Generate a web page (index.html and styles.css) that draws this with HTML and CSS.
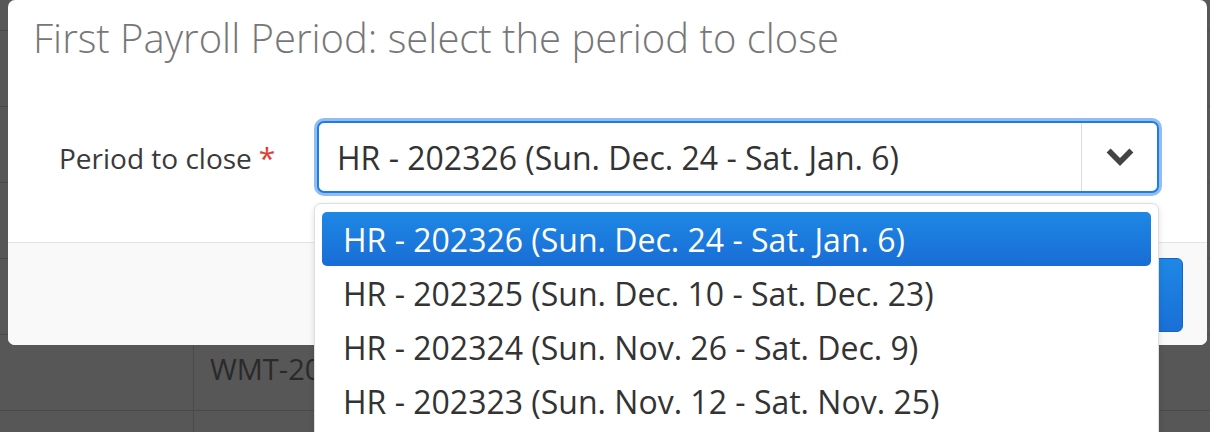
FILE: index.html
```html
<!DOCTYPE html>
<html>
<head>
<meta charset="utf-8">
<link rel="stylesheet" href="styles.css">
</head>
<body>
<div class="backdrop">
  <div class="bg-row first"><div class="cell c1"></div><div class="cell c2"></div></div>
  <div class="bg-row"><div class="cell c1"></div><div class="cell c2"></div></div>
  <div class="bg-row"><div class="cell c1"></div><div class="cell c2"></div></div>
  <div class="bg-row"><div class="cell c1"></div><div class="cell c2"></div></div>
  <div class="bg-row"><div class="cell c1"></div><div class="cell c2"></div></div>
  <div class="bg-row"><div class="cell c1"></div><div class="cell c2">WMT-2023-0412</div></div>
  <div class="bg-row"><div class="cell c1"></div><div class="cell c2"></div></div>
</div>

<div class="modal">
  <div class="modal-header">
    <h4 class="modal-title">First Payroll Period: select the period to close</h4>
  </div>
  <div class="modal-body">
    <div class="form-row">
      <label class="control-label">Period to close<span class="req">*</span></label>
      <div class="select">
        <span class="select-value">HR - 202326 (Sun. Dec. 24 - Sat. Jan. 6)</span>
        <span class="select-toggle">
          <svg width="30" height="20" viewBox="0 0 30 20"><path d="M3.6 3.6 L15 15 L26.4 3.6" fill="none" stroke="#444" stroke-width="5.6" stroke-linejoin="miter"/></svg>
        </span>
      </div>
    </div>
  </div>
  <div class="modal-footer">
    <button class="btn-primary">Close period</button>
  </div>
</div>

<ul class="dropdown">
  <li class="opt active">HR - 202326 (Sun. Dec. 24 - Sat. Jan. 6)</li>
  <li class="opt">HR - 202325 (Sun. Dec. 10 - Sat. Dec. 23)</li>
  <li class="opt">HR - 202324 (Sun. Nov. 26 - Sat. Dec. 9)</li>
  <li class="opt">HR - 202323 (Sun. Nov. 12 - Sat. Nov. 25)</li>
</ul>
</body>
</html>
```

FILE: styles.css
```css
html, body {
  margin: 0;
  padding: 0;
  height: 100%;
}
body {
  background: #575757;
  font-family: "Open Sans", "Liberation Sans", sans-serif;
  overflow: hidden;
  position: relative;
}
.backdrop {
  display: flex;
  flex-direction: column;
}
.bg-row {
  display: flex;
  height: 75px;
  border-bottom: 1px solid #4a4a4a;
}
.bg-row.first {
  height: 30px;
}
.cell {
  box-sizing: border-box;
  height: 100%;
}
.c1 {
  width: 194px;
  border-right: 1px solid #4a4a4a;
}
.c2 {
  flex: 1;
  padding: 0 0 8px 16px;
  display: flex;
  align-items: center;
  font-size: 29px;
  color: #2a2a2a;
}

.modal {
  position: absolute;
  left: 8px;
  top: 0;
  width: 1199px;
  height: 345px;
  background: #fff;
  border-radius: 7px;
  overflow: hidden;
  display: flex;
  flex-direction: column;
}
.modal-header {
  height: 92px;
  padding: 12px 25px 0;
  box-sizing: border-box;
}
.modal-title {
  margin: 0;
  font-size: 40px;
  line-height: 52px;
  font-weight: 300;
  color: #777;
}
.modal-body {
  flex: 1;
  padding: 29px 46px 0 51px;
}
.form-row {
  display: flex;
  align-items: center;
}
.control-label {
  width: 258px;
  font-size: 28px;
  color: #3a3a3a;
}
.req {
  color: #e53c2e;
  margin-left: 7px;
  font-size: 30px;
}
.select {
  box-sizing: border-box;
  width: 842px;
  height: 72px;
  border: 2px solid #1f7de2;
  border-radius: 7px;
  box-shadow: 0 0 0 3px #92bdf0;
  display: flex;
  align-items: stretch;
  background: #fff;
}
.select-value {
  flex: 1;
  display: flex;
  align-items: center;
  padding-left: 18px;
  font-size: 32px;
  color: #333;
}
.select-toggle {
  width: 75px;
  border-left: 1px solid #dcdcdc;
  display: flex;
  align-items: center;
  justify-content: center;
}
.modal-footer {
  height: 103px;
  box-sizing: border-box;
  border-top: 1px solid #e3e3e3;
  background: #f9f9f9;
  display: flex;
  justify-content: flex-end;
  align-items: flex-start;
  padding: 15px 24px 0 0;
}
.btn-primary {
  width: 220px;
  height: 74px;
  border: 1px solid #1663c7;
  border-radius: 6px;
  background: linear-gradient(#1e88e5, #1a6fd6);
  color: #fff;
  font-family: inherit;
  font-size: 28px;
}

.dropdown {
  position: absolute;
  left: 314px;
  top: 203px;
  width: 845px;
  height: 260px;
  box-sizing: border-box;
  margin: 0;
  padding: 8px 7px;
  list-style: none;
  background: #fff;
  border: 1px solid #dedede;
  border-radius: 7px;
  box-shadow: 0 2px 6px rgba(0,0,0,0.12);
}
.opt {
  height: 54px;
  display: flex;
  align-items: center;
  padding-left: 21px;
  font-size: 32px;
  color: #333;
  border-radius: 5px;
}
.opt.active {
  background: linear-gradient(#1e88e5, #196dd5);
  color: #fff;
}
```
